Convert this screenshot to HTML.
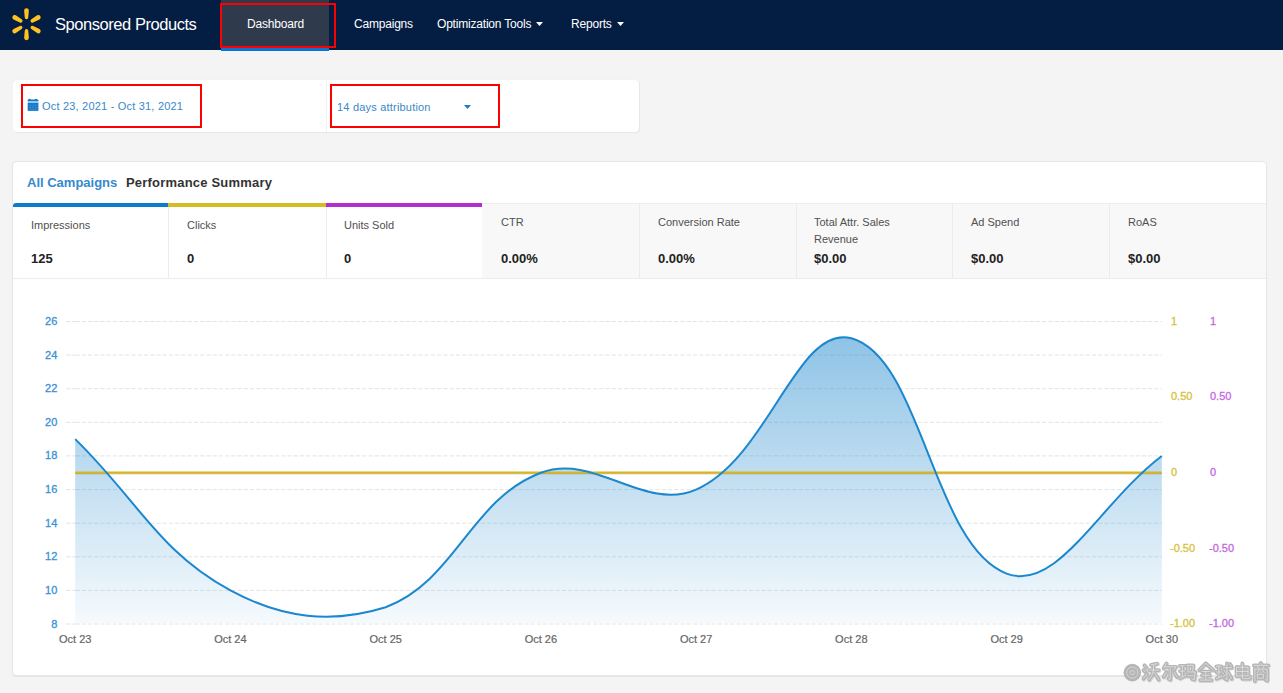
<!DOCTYPE html>
<html><head><meta charset="utf-8">
<style>
*{margin:0;padding:0;box-sizing:border-box}
html,body{width:1283px;height:693px;overflow:hidden;background:#f4f4f4;font-family:"Liberation Sans",sans-serif}
.abs{position:absolute}
#hdr{position:absolute;left:0;top:0;width:1283px;height:50px;background:#041d42}
#tab{position:absolute;left:221px;top:0;width:108px;height:48px;background:#2f3a4d}
#tabline{position:absolute;left:221px;top:48px;width:108px;height:3px;background:#0a74d0}
.nav{position:absolute;top:17px;font-size:12px;color:#fff;white-space:nowrap;letter-spacing:-0.2px}
.redbox{position:absolute;border:2px solid #f00}
.card{position:absolute;background:#fff;border-radius:4px;box-shadow:0 0 0 1px rgba(0,0,0,0.045),1px 1px 2px rgba(0,0,0,0.07)}
.lbl{position:absolute;font-size:11px;color:#505050;white-space:nowrap}
.val{position:absolute;font-size:13px;font-weight:bold;color:#222;white-space:nowrap}
.tile{position:absolute;top:203px;height:75px}
</style></head><body>
<div id="hdr"></div>
<div id="tab"></div>
<div id="tabline"></div>
<svg class="abs" style="left:0;top:0" width="60" height="50" viewBox="0 0 60 50">
 <g fill="#ffc220" transform="translate(26.5,24.2)">
  <path id="sp" d="M-2.35,-13.65 A2.35,2.35 0 0 1 2.35,-13.65 L1.75,-6.65 A1.75,1.75 0 0 1 -1.75,-6.65 Z"/>
  <use href="#sp" transform="rotate(60)"/>
  <use href="#sp" transform="rotate(120)"/>
  <use href="#sp" transform="rotate(180)"/>
  <use href="#sp" transform="rotate(240)"/>
  <use href="#sp" transform="rotate(300)"/>
 </g>
</svg>
<div class="abs" style="left:55px;top:15px;font-size:16.5px;color:#fff;white-space:nowrap;letter-spacing:-0.45px">Sponsored Products</div>
<div class="nav" style="left:247px">Dashboard</div>
<div class="nav" style="left:354px">Campaigns</div>
<div class="nav" style="left:437px">Optimization Tools</div>
<div class="nav" style="left:571px">Reports</div>
<svg class="abs" style="left:536px;top:22px" width="8" height="5"><path d="M0,0 L7,0 L3.5,4 Z" fill="#fff"/></svg>
<svg class="abs" style="left:617px;top:22px" width="8" height="5"><path d="M0,0 L7,0 L3.5,4 Z" fill="#fff"/></svg>
<div class="redbox" style="left:220px;top:3px;width:116px;height:45px"></div>

<div class="card" style="left:13px;top:79.5px;width:626px;height:52.5px;box-shadow:0 0 1px rgba(0,0,0,0.10),1px 1px 1px rgba(0,0,0,0.05)"></div>
<div class="abs" style="left:326px;top:79px;width:1px;height:53px;background:#f2f2f2"></div>
<svg class="abs" style="left:27px;top:98px" width="12" height="14" viewBox="0 0 12 14">
 <g fill="#1577c8">
  <path d="M0.7,3.2 L0.7,2 Q0.7,1.6 1.2,1.5 L2,0.9 Q2.6,0.6 3.2,0.9 L3.8,1.5 L7.8,1.5 L8.4,0.9 Q9,0.6 9.6,0.9 L10.4,1.5 Q11.4,1.6 11.4,2 L11.4,3.2 Z"/>
  <rect x="0.7" y="4.8" width="10.7" height="8.1"/>
  <rect x="0.7" y="3.2" width="10.7" height="1.6" fill="#8cc0e8"/>
 </g>
 <g stroke="#6fb0e4" stroke-width="0.5" opacity="0.45">
  <line x1="0.7" y1="7.3" x2="11.4" y2="7.3"/><line x1="0.7" y1="9.5" x2="11.4" y2="9.5"/><line x1="0.7" y1="11.6" x2="11.4" y2="11.6"/>
  <line x1="3.4" y1="5.5" x2="3.4" y2="12.9"/><line x1="6" y1="5.5" x2="6" y2="12.9"/><line x1="8.7" y1="5.5" x2="8.7" y2="12.9"/>
 </g>
</svg>
<div class="abs" style="left:42px;top:100px;font-size:11px;color:#3a87c9;white-space:nowrap;letter-spacing:0.2px">Oct 23, 2021 - Oct 31, 2021</div>
<div class="abs" style="left:337px;top:101px;font-size:11px;color:#3a87c9;white-space:nowrap;letter-spacing:0.2px">14 days attribution</div>
<svg class="abs" style="left:464px;top:105px" width="8" height="5"><path d="M0,0 L7,0 L3.5,4 Z" fill="#1f7dc8"/></svg>
<div class="redbox" style="left:21px;top:84px;width:181px;height:44px"></div>
<div class="redbox" style="left:330px;top:84px;width:170px;height:44px"></div>

<div class="card" style="left:12px;top:161px;width:1255px;height:515px;border:1px solid #e6e6e6;box-shadow:0 1px 1px rgba(0,0,0,0.06)"></div>
<div class="abs" style="left:27px;top:175px;font-size:13px;font-weight:bold;color:#3589cf;white-space:nowrap">All Campaigns</div>
<div class="abs" style="left:126px;top:175px;font-size:13px;font-weight:bold;color:#333;white-space:nowrap;letter-spacing:0.2px">Performance Summary</div>

<div class="tile" style="left:482px;width:784px;background:#f8f8f8"></div>
<div class="abs" style="left:13px;top:278px;width:1253px;height:1px;background:#ececec"></div>
<div class="abs" style="left:168px;top:207px;width:1px;height:71px;background:#ececec"></div>
<div class="abs" style="left:326px;top:207px;width:1px;height:71px;background:#ececec"></div>
<div class="abs" style="left:639px;top:203px;width:1px;height:75px;background:#ececec"></div>
<div class="abs" style="left:796px;top:203px;width:1px;height:75px;background:#ececec"></div>
<div class="abs" style="left:952px;top:203px;width:1px;height:75px;background:#ececec"></div>
<div class="abs" style="left:1109px;top:203px;width:1px;height:75px;background:#ececec"></div>
<div class="abs" style="left:482px;top:203px;width:784px;height:1px;background:#ececec"></div>
<div class="abs" style="left:13px;top:203px;width:155px;height:4px;background:#0b7ccb;border-top-left-radius:3px"></div>
<div class="abs" style="left:168px;top:203px;width:158px;height:4px;background:#d3bd21"></div>
<div class="abs" style="left:326px;top:203px;width:156px;height:4px;background:#b02fce"></div>

<div class="lbl" style="left:31px;top:218.5px">Impressions</div>
<div class="lbl" style="left:187px;top:218.5px">Clicks</div>
<div class="lbl" style="left:344px;top:218.5px">Units Sold</div>
<div class="lbl" style="left:501px;top:215.5px">CTR</div>
<div class="lbl" style="left:658px;top:215.5px">Conversion Rate</div>
<div class="lbl" style="left:814px;top:213.5px;line-height:17.3px">Total Attr. Sales<br>Revenue</div>
<div class="lbl" style="left:971px;top:215.5px">Ad Spend</div>
<div class="lbl" style="left:1128px;top:215.5px">RoAS</div>

<div class="val" style="left:31px;top:251px">125</div>
<div class="val" style="left:187px;top:251px">0</div>
<div class="val" style="left:344px;top:251px">0</div>
<div class="val" style="left:501px;top:251px">0.00%</div>
<div class="val" style="left:658px;top:251px">0.00%</div>
<div class="val" style="left:814px;top:251px">$0.00</div>
<div class="val" style="left:971px;top:251px">$0.00</div>
<div class="val" style="left:1128px;top:251px">$0.00</div>

<svg class="abs" style="left:0;top:0" width="1283" height="693" viewBox="0 0 1283 693">
 <defs>
  <linearGradient id="fg" x1="0" y1="321.5" x2="0" y2="624" gradientUnits="userSpaceOnUse">
   <stop offset="0" stop-color="rgb(28,134,204)" stop-opacity="0.52"/>
   <stop offset="1" stop-color="rgb(28,134,204)" stop-opacity="0.04"/>
  </linearGradient>
 </defs>
 <g stroke="#e4e4e4" stroke-width="1" stroke-dasharray="4.3,1.937" stroke-dashoffset="0.15">
  <line x1="81.7" y1="321.5" x2="1162" y2="321.5"/><line x1="66.2" y1="321.5" x2="80" y2="321.5" stroke-dasharray="4.9,1.3,7.6,0"/>
  <line x1="81.7" y1="355.1" x2="1162" y2="355.1"/><line x1="66.2" y1="355.1" x2="80" y2="355.1" stroke-dasharray="4.9,1.3,7.6,0"/>
  <line x1="81.7" y1="388.7" x2="1162" y2="388.7"/><line x1="66.2" y1="388.7" x2="80" y2="388.7" stroke-dasharray="4.9,1.3,7.6,0"/>
  <line x1="81.7" y1="422.3" x2="1162" y2="422.3"/><line x1="66.2" y1="422.3" x2="80" y2="422.3" stroke-dasharray="4.9,1.3,7.6,0"/>
  <line x1="81.7" y1="455.9" x2="1162" y2="455.9"/><line x1="66.2" y1="455.9" x2="80" y2="455.9" stroke-dasharray="4.9,1.3,7.6,0"/>
  <line x1="81.7" y1="489.6" x2="1162" y2="489.6"/><line x1="66.2" y1="489.6" x2="80" y2="489.6" stroke-dasharray="4.9,1.3,7.6,0"/>
  <line x1="81.7" y1="523.2" x2="1162" y2="523.2"/><line x1="66.2" y1="523.2" x2="80" y2="523.2" stroke-dasharray="4.9,1.3,7.6,0"/>
  <line x1="81.7" y1="556.8" x2="1162" y2="556.8"/><line x1="66.2" y1="556.8" x2="80" y2="556.8" stroke-dasharray="4.9,1.3,7.6,0"/>
  <line x1="81.7" y1="590.4" x2="1162" y2="590.4"/><line x1="66.2" y1="590.4" x2="80" y2="590.4" stroke-dasharray="4.9,1.3,7.6,0"/>
  <line x1="81.7" y1="624.0" x2="1162" y2="624.0"/><line x1="66.2" y1="624.0" x2="80" y2="624.0" stroke-dasharray="4.9,1.3,7.6,0"/>
 </g>
 <path d="M 75.20 439.14 C 137.29 499.64 158.25 551.32 230.43 590.39 C 282.43 618.54 332.02 624.00 385.66 607.19 C 456.20 580.46 470.34 499.48 540.89 472.75 C 594.52 452.43 644.11 512.07 696.11 489.56 C 768.30 458.30 797.36 323.70 851.34 338.31 C 921.55 357.31 933.13 545.76 1006.57 573.58 C 1057.32 592.81 1099.71 503.00 1161.80 455.94 L 1161.8 623 L 75.2 623 Z" fill="url(#fg)" stroke="none"/>
 <line x1="75.2" y1="473.4" x2="1161.8" y2="473.4" stroke="#b0562a" stroke-width="1.6" opacity="0.45"/>
 <line x1="75.2" y1="472.5" x2="1161.8" y2="472.5" stroke="#d4bb14" stroke-width="2"/>
 <path d="M 75.20 439.14 C 137.29 499.64 158.25 551.32 230.43 590.39 C 282.43 618.54 332.02 624.00 385.66 607.19 C 456.20 580.46 470.34 499.48 540.89 472.75 C 594.52 452.43 644.11 512.07 696.11 489.56 C 768.30 458.30 797.36 323.70 851.34 338.31 C 921.55 357.31 933.13 545.76 1006.57 573.58 C 1057.32 592.81 1099.71 503.00 1161.80 455.94" fill="none" stroke="#1a87cf" stroke-width="2"/>
 <g font-family="Liberation Sans" font-size="11" fill="#3a91d6" stroke="#3a91d6" stroke-width="0.3" text-anchor="end">
  <text x="57.3" y="325.0">26</text>
  <text x="57.3" y="358.6">24</text>
  <text x="57.3" y="392.2">22</text>
  <text x="57.3" y="425.8">20</text>
  <text x="57.3" y="459.4">18</text>
  <text x="57.3" y="493.1">16</text>
  <text x="57.3" y="526.7">14</text>
  <text x="57.3" y="560.3">12</text>
  <text x="57.3" y="593.9">10</text>
  <text x="57.3" y="627.5">8</text>
 </g>
 <g font-family="Liberation Sans" font-size="11" fill="#d6c23a" stroke="#d6c23a" stroke-width="0.3">
  <text x="1171" y="324.8">1</text>
  <text x="1171" y="400.4">0.50</text>
  <text x="1171" y="476.1">0</text>
  <text x="1170" y="551.7">-0.50</text>
  <text x="1170" y="627.3">-1.00</text>
 </g>
 <g font-family="Liberation Sans" font-size="11" fill="#c467df" stroke="#c467df" stroke-width="0.3">
  <text x="1210" y="324.8">1</text>
  <text x="1210" y="400.4">0.50</text>
  <text x="1210" y="476.1">0</text>
  <text x="1209" y="551.7">-0.50</text>
  <text x="1209" y="627.3">-1.00</text>
 </g>
 <g font-family="Liberation Sans" font-size="11" fill="#666" stroke="#666" stroke-width="0.2" text-anchor="middle">
  <text x="75.2" y="642.6">Oct 23</text>
  <text x="230.4" y="642.6">Oct 24</text>
  <text x="385.7" y="642.6">Oct 25</text>
  <text x="540.9" y="642.6">Oct 26</text>
  <text x="696.1" y="642.6">Oct 27</text>
  <text x="851.3" y="642.6">Oct 28</text>
  <text x="1006.6" y="642.6">Oct 29</text>
  <text x="1161.8" y="642.6">Oct 30</text>
 </g>
</svg>
<!--WM-->
<svg class="abs" style="left:1115px;top:655px" width="168" height="38" viewBox="0 0 168 38">
 <g transform="translate(0.6,0.8)" opacity="0.35">
  <g fill="none" stroke="#999" stroke-width="4.4" stroke-linecap="round" stroke-linejoin="round" ><path transform="translate(27.50,7.5) scale(0.95)" d="M2,3 L4,5"/><path transform="translate(27.50,7.5) scale(0.95)" d="M1,8 L3,10"/><path transform="translate(27.50,7.5) scale(0.95)" d="M1,17 L5,12"/><path transform="translate(27.50,7.5) scale(0.95)" d="M9,2.5 L15.5,1.2"/><path transform="translate(27.50,7.5) scale(0.95)" d="M7,8 L17,8"/><path transform="translate(27.50,7.5) scale(0.95)" d="M11.5,3 L11.5,8 Q10.5,14 7,18"/><path transform="translate(27.50,7.5) scale(0.95)" d="M12,10 L17,18"/><path transform="translate(45.75,7.5) scale(0.95)" d="M6,1 L3,6"/><path transform="translate(45.75,7.5) scale(0.95)" d="M5,4.5 L16,4.5 L14,7.5"/><path transform="translate(45.75,7.5) scale(0.95)" d="M10,6.5 L10,18 L8,17"/><path transform="translate(45.75,7.5) scale(0.95)" d="M6,10 L3,15"/><path transform="translate(45.75,7.5) scale(0.95)" d="M14,10 L17,15"/><path transform="translate(64.00,7.5) scale(0.95)" d="M1,3.5 L6,3.5"/><path transform="translate(64.00,7.5) scale(0.95)" d="M1,9 L6,9"/><path transform="translate(64.00,7.5) scale(0.95)" d="M3.5,3.5 L3.5,15"/><path transform="translate(64.00,7.5) scale(0.95)" d="M1,16.5 L7,13.5"/><path transform="translate(64.00,7.5) scale(0.95)" d="M8.5,3 L15,3 L14.5,9"/><path transform="translate(64.00,7.5) scale(0.95)" d="M9.5,4 L9.5,10 L17,10 L16,18 L13.5,17"/><path transform="translate(64.00,7.5) scale(0.95)" d="M8.5,14 L15,14"/><path transform="translate(82.25,7.5) scale(0.95)" d="M9,1 L2,8"/><path transform="translate(82.25,7.5) scale(0.95)" d="M9,1 L17,8"/><path transform="translate(82.25,7.5) scale(0.95)" d="M5,9.5 L13,9.5"/><path transform="translate(82.25,7.5) scale(0.95)" d="M5,13.5 L13,13.5"/><path transform="translate(82.25,7.5) scale(0.95)" d="M3,18.5 L15,18.5"/><path transform="translate(82.25,7.5) scale(0.95)" d="M9,9.5 L9,18.5"/><path transform="translate(100.50,7.5) scale(0.95)" d="M1,4 L6,4"/><path transform="translate(100.50,7.5) scale(0.95)" d="M1,10 L6,10"/><path transform="translate(100.50,7.5) scale(0.95)" d="M3.5,4 L3.5,16"/><path transform="translate(100.50,7.5) scale(0.95)" d="M1,17 L7,14"/><path transform="translate(100.50,7.5) scale(0.95)" d="M8,5.5 L17,5.5"/><path transform="translate(100.50,7.5) scale(0.95)" d="M12,1 L12,18 L10,17"/><path transform="translate(100.50,7.5) scale(0.95)" d="M15,1.5 L16.5,3.5"/><path transform="translate(100.50,7.5) scale(0.95)" d="M9,8 L10.5,10.5"/><path transform="translate(100.50,7.5) scale(0.95)" d="M8,15.5 L11,12"/><path transform="translate(100.50,7.5) scale(0.95)" d="M13,10 L17,17"/><path transform="translate(118.75,7.5) scale(0.95)" d="M3,5 L15,5 L15,14"/><path transform="translate(118.75,7.5) scale(0.95)" d="M3,5 L3,14"/><path transform="translate(118.75,7.5) scale(0.95)" d="M3,9.5 L15,9.5"/><path transform="translate(118.75,7.5) scale(0.95)" d="M3,14 L15,14"/><path transform="translate(118.75,7.5) scale(0.95)" d="M9,1 L9,17 L17,17 L17,14.5"/><path transform="translate(137.00,7.5) scale(0.95)" d="M9,0.5 L10,2"/><path transform="translate(137.00,7.5) scale(0.95)" d="M2,3 L17,3"/><path transform="translate(137.00,7.5) scale(0.95)" d="M6,4 L7,6"/><path transform="translate(137.00,7.5) scale(0.95)" d="M12.5,4 L11.5,6"/><path transform="translate(137.00,7.5) scale(0.95)" d="M3,7 L3,19.5"/><path transform="translate(137.00,7.5) scale(0.95)" d="M3,7 L16,7 L16,19 L14,18"/><path transform="translate(137.00,7.5) scale(0.95)" d="M7.5,8 L5.5,11"/><path transform="translate(137.00,7.5) scale(0.95)" d="M11,8 L13,11"/><path transform="translate(137.00,7.5) scale(0.95)" d="M6,12.5 L12,12.5 L12,16.5 L6,16.5 Z"/></g>
 </g>
 <circle cx="17.3" cy="17.6" r="8.8" fill="#b5b5b5"/>
 <circle cx="17.3" cy="17.6" r="5.6" fill="none" stroke="#fff" stroke-width="0.6" opacity="0.7"/>
 <circle cx="17.3" cy="17.6" r="2.2" fill="none" stroke="#fff" stroke-width="0.6" opacity="0.7"/>
  <g fill="none" stroke="#b5b5b5" stroke-width="4" stroke-linecap="round" stroke-linejoin="round" ><path transform="translate(27.50,7.5) scale(0.95)" d="M2,3 L4,5"/><path transform="translate(27.50,7.5) scale(0.95)" d="M1,8 L3,10"/><path transform="translate(27.50,7.5) scale(0.95)" d="M1,17 L5,12"/><path transform="translate(27.50,7.5) scale(0.95)" d="M9,2.5 L15.5,1.2"/><path transform="translate(27.50,7.5) scale(0.95)" d="M7,8 L17,8"/><path transform="translate(27.50,7.5) scale(0.95)" d="M11.5,3 L11.5,8 Q10.5,14 7,18"/><path transform="translate(27.50,7.5) scale(0.95)" d="M12,10 L17,18"/><path transform="translate(45.75,7.5) scale(0.95)" d="M6,1 L3,6"/><path transform="translate(45.75,7.5) scale(0.95)" d="M5,4.5 L16,4.5 L14,7.5"/><path transform="translate(45.75,7.5) scale(0.95)" d="M10,6.5 L10,18 L8,17"/><path transform="translate(45.75,7.5) scale(0.95)" d="M6,10 L3,15"/><path transform="translate(45.75,7.5) scale(0.95)" d="M14,10 L17,15"/><path transform="translate(64.00,7.5) scale(0.95)" d="M1,3.5 L6,3.5"/><path transform="translate(64.00,7.5) scale(0.95)" d="M1,9 L6,9"/><path transform="translate(64.00,7.5) scale(0.95)" d="M3.5,3.5 L3.5,15"/><path transform="translate(64.00,7.5) scale(0.95)" d="M1,16.5 L7,13.5"/><path transform="translate(64.00,7.5) scale(0.95)" d="M8.5,3 L15,3 L14.5,9"/><path transform="translate(64.00,7.5) scale(0.95)" d="M9.5,4 L9.5,10 L17,10 L16,18 L13.5,17"/><path transform="translate(64.00,7.5) scale(0.95)" d="M8.5,14 L15,14"/><path transform="translate(82.25,7.5) scale(0.95)" d="M9,1 L2,8"/><path transform="translate(82.25,7.5) scale(0.95)" d="M9,1 L17,8"/><path transform="translate(82.25,7.5) scale(0.95)" d="M5,9.5 L13,9.5"/><path transform="translate(82.25,7.5) scale(0.95)" d="M5,13.5 L13,13.5"/><path transform="translate(82.25,7.5) scale(0.95)" d="M3,18.5 L15,18.5"/><path transform="translate(82.25,7.5) scale(0.95)" d="M9,9.5 L9,18.5"/><path transform="translate(100.50,7.5) scale(0.95)" d="M1,4 L6,4"/><path transform="translate(100.50,7.5) scale(0.95)" d="M1,10 L6,10"/><path transform="translate(100.50,7.5) scale(0.95)" d="M3.5,4 L3.5,16"/><path transform="translate(100.50,7.5) scale(0.95)" d="M1,17 L7,14"/><path transform="translate(100.50,7.5) scale(0.95)" d="M8,5.5 L17,5.5"/><path transform="translate(100.50,7.5) scale(0.95)" d="M12,1 L12,18 L10,17"/><path transform="translate(100.50,7.5) scale(0.95)" d="M15,1.5 L16.5,3.5"/><path transform="translate(100.50,7.5) scale(0.95)" d="M9,8 L10.5,10.5"/><path transform="translate(100.50,7.5) scale(0.95)" d="M8,15.5 L11,12"/><path transform="translate(100.50,7.5) scale(0.95)" d="M13,10 L17,17"/><path transform="translate(118.75,7.5) scale(0.95)" d="M3,5 L15,5 L15,14"/><path transform="translate(118.75,7.5) scale(0.95)" d="M3,5 L3,14"/><path transform="translate(118.75,7.5) scale(0.95)" d="M3,9.5 L15,9.5"/><path transform="translate(118.75,7.5) scale(0.95)" d="M3,14 L15,14"/><path transform="translate(118.75,7.5) scale(0.95)" d="M9,1 L9,17 L17,17 L17,14.5"/><path transform="translate(137.00,7.5) scale(0.95)" d="M9,0.5 L10,2"/><path transform="translate(137.00,7.5) scale(0.95)" d="M2,3 L17,3"/><path transform="translate(137.00,7.5) scale(0.95)" d="M6,4 L7,6"/><path transform="translate(137.00,7.5) scale(0.95)" d="M12.5,4 L11.5,6"/><path transform="translate(137.00,7.5) scale(0.95)" d="M3,7 L3,19.5"/><path transform="translate(137.00,7.5) scale(0.95)" d="M3,7 L16,7 L16,19 L14,18"/><path transform="translate(137.00,7.5) scale(0.95)" d="M7.5,8 L5.5,11"/><path transform="translate(137.00,7.5) scale(0.95)" d="M11,8 L13,11"/><path transform="translate(137.00,7.5) scale(0.95)" d="M6,12.5 L12,12.5 L12,16.5 L6,16.5 Z"/></g>
  <g fill="none" stroke="#f0f0f0" stroke-width="0.8" stroke-linecap="round" stroke-linejoin="round" opacity="0.85"><path transform="translate(27.50,7.5) scale(0.95)" d="M2,3 L4,5"/><path transform="translate(27.50,7.5) scale(0.95)" d="M1,8 L3,10"/><path transform="translate(27.50,7.5) scale(0.95)" d="M1,17 L5,12"/><path transform="translate(27.50,7.5) scale(0.95)" d="M9,2.5 L15.5,1.2"/><path transform="translate(27.50,7.5) scale(0.95)" d="M7,8 L17,8"/><path transform="translate(27.50,7.5) scale(0.95)" d="M11.5,3 L11.5,8 Q10.5,14 7,18"/><path transform="translate(27.50,7.5) scale(0.95)" d="M12,10 L17,18"/><path transform="translate(45.75,7.5) scale(0.95)" d="M6,1 L3,6"/><path transform="translate(45.75,7.5) scale(0.95)" d="M5,4.5 L16,4.5 L14,7.5"/><path transform="translate(45.75,7.5) scale(0.95)" d="M10,6.5 L10,18 L8,17"/><path transform="translate(45.75,7.5) scale(0.95)" d="M6,10 L3,15"/><path transform="translate(45.75,7.5) scale(0.95)" d="M14,10 L17,15"/><path transform="translate(64.00,7.5) scale(0.95)" d="M1,3.5 L6,3.5"/><path transform="translate(64.00,7.5) scale(0.95)" d="M1,9 L6,9"/><path transform="translate(64.00,7.5) scale(0.95)" d="M3.5,3.5 L3.5,15"/><path transform="translate(64.00,7.5) scale(0.95)" d="M1,16.5 L7,13.5"/><path transform="translate(64.00,7.5) scale(0.95)" d="M8.5,3 L15,3 L14.5,9"/><path transform="translate(64.00,7.5) scale(0.95)" d="M9.5,4 L9.5,10 L17,10 L16,18 L13.5,17"/><path transform="translate(64.00,7.5) scale(0.95)" d="M8.5,14 L15,14"/><path transform="translate(82.25,7.5) scale(0.95)" d="M9,1 L2,8"/><path transform="translate(82.25,7.5) scale(0.95)" d="M9,1 L17,8"/><path transform="translate(82.25,7.5) scale(0.95)" d="M5,9.5 L13,9.5"/><path transform="translate(82.25,7.5) scale(0.95)" d="M5,13.5 L13,13.5"/><path transform="translate(82.25,7.5) scale(0.95)" d="M3,18.5 L15,18.5"/><path transform="translate(82.25,7.5) scale(0.95)" d="M9,9.5 L9,18.5"/><path transform="translate(100.50,7.5) scale(0.95)" d="M1,4 L6,4"/><path transform="translate(100.50,7.5) scale(0.95)" d="M1,10 L6,10"/><path transform="translate(100.50,7.5) scale(0.95)" d="M3.5,4 L3.5,16"/><path transform="translate(100.50,7.5) scale(0.95)" d="M1,17 L7,14"/><path transform="translate(100.50,7.5) scale(0.95)" d="M8,5.5 L17,5.5"/><path transform="translate(100.50,7.5) scale(0.95)" d="M12,1 L12,18 L10,17"/><path transform="translate(100.50,7.5) scale(0.95)" d="M15,1.5 L16.5,3.5"/><path transform="translate(100.50,7.5) scale(0.95)" d="M9,8 L10.5,10.5"/><path transform="translate(100.50,7.5) scale(0.95)" d="M8,15.5 L11,12"/><path transform="translate(100.50,7.5) scale(0.95)" d="M13,10 L17,17"/><path transform="translate(118.75,7.5) scale(0.95)" d="M3,5 L15,5 L15,14"/><path transform="translate(118.75,7.5) scale(0.95)" d="M3,5 L3,14"/><path transform="translate(118.75,7.5) scale(0.95)" d="M3,9.5 L15,9.5"/><path transform="translate(118.75,7.5) scale(0.95)" d="M3,14 L15,14"/><path transform="translate(118.75,7.5) scale(0.95)" d="M9,1 L9,17 L17,17 L17,14.5"/><path transform="translate(137.00,7.5) scale(0.95)" d="M9,0.5 L10,2"/><path transform="translate(137.00,7.5) scale(0.95)" d="M2,3 L17,3"/><path transform="translate(137.00,7.5) scale(0.95)" d="M6,4 L7,6"/><path transform="translate(137.00,7.5) scale(0.95)" d="M12.5,4 L11.5,6"/><path transform="translate(137.00,7.5) scale(0.95)" d="M3,7 L3,19.5"/><path transform="translate(137.00,7.5) scale(0.95)" d="M3,7 L16,7 L16,19 L14,18"/><path transform="translate(137.00,7.5) scale(0.95)" d="M7.5,8 L5.5,11"/><path transform="translate(137.00,7.5) scale(0.95)" d="M11,8 L13,11"/><path transform="translate(137.00,7.5) scale(0.95)" d="M6,12.5 L12,12.5 L12,16.5 L6,16.5 Z"/></g>
</svg>
<!--/WM-->
</body></html>
